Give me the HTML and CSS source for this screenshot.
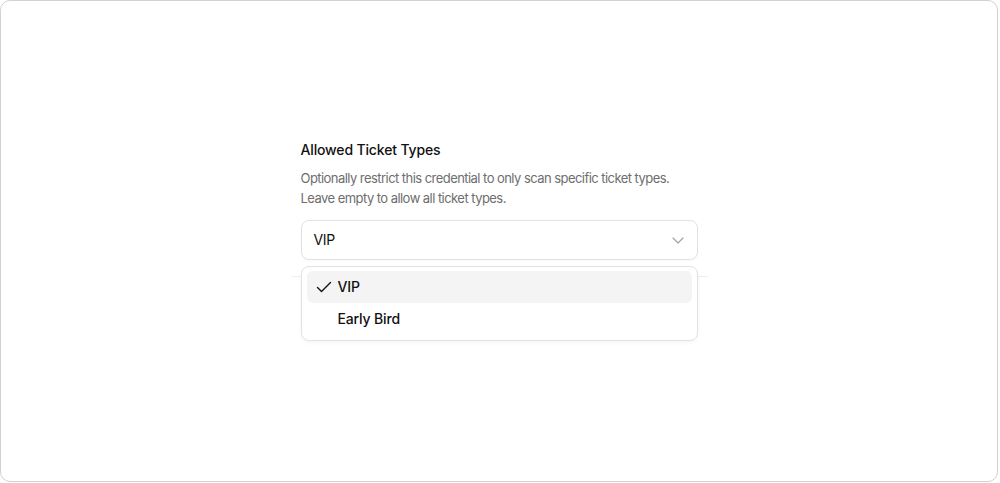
FILE: index.html
```html
<!DOCTYPE html>
<html>
<head>
<meta charset="utf-8">
<link rel="stylesheet" href="styles.css">
</head>
<body>
<div class="frame">
  <div class="field">
    <div class="label">Allowed Ticket Types</div>
    <div class="desc">Optionally restrict this credential to only scan specific ticket types.<br>Leave empty to allow all ticket types.</div>
    <div class="select">
      <span class="value">VIP</span>
      <svg class="chev" width="14" height="14" viewBox="0 0 14 14"><path d="M2 5 L7 10 L12 5" fill="none" stroke="#a0a0a0" stroke-width="1.1" stroke-linecap="round" stroke-linejoin="round"/></svg>
    </div>
    <div class="popover-area">
      <div class="listbox">
        <div class="option active">
          <svg class="check" width="16" height="16" viewBox="0 0 16 16"><path d="M1.5 8.5 L5.5 12.5 L14.5 3.5" fill="none" stroke="#111" stroke-width="1.4" stroke-linecap="round" stroke-linejoin="round"/></svg>
          <span>VIP</span>
        </div>
        <div class="option">
          <span class="check-space"></span>
          <span>Early Bird</span>
        </div>
      </div>
    </div>
  </div>
</div>
</body>
</html>
```
FILE: styles.css
```css
html, body {
  margin: 0;
  padding: 0;
  background: #fff;
}
body {
  font-family: Inter, "Noto Sans", sans-serif;
  color: #111;
}
.frame {
  width: 996px;
  height: 480px;
  border: 1px solid #d2d2d2;
  border-radius: 10px;
  display: flex;
  flex-direction: column;
  align-items: center;
  justify-content: center;
}
.field {
  width: 397px;
  margin-top: -2px;
}
.label {
  font-size: 14px;
  line-height: 20px;
  font-weight: 500;
  color: #111;
  letter-spacing: -0.15px;
}
.desc {
  margin-top: 8px;
  font-size: 13px;
  line-height: 20px;
  color: #6e6e6e;
  letter-spacing: -0.55px;
  white-space: nowrap;
}
.select {
  margin-top: 12px;
  height: 38px;
  border: 1px solid #e2e2e2;
  border-radius: 8px;
  display: flex;
  align-items: center;
  justify-content: space-between;
  padding: 0 12px 0 12px;
  box-shadow: 0 1px 2px rgba(0,0,0,0.03);
}
.value {
  font-size: 14px;
  color: #111;
  letter-spacing: -0.3px;
}
.chev {
  display: block;
}
.popover-area {
  position: relative;
  padding-top: 6px;
}
.popover-area::before {
  content: "";
  position: absolute;
  top: 16px;
  left: -10px;
  right: -10px;
  height: 1px;
  background: #efefef;
}
.listbox {
  position: relative;
  z-index: 1;
  background: #fff;
  border: 1px solid #e2e2e2;
  border-radius: 8px;
  padding: 4px 5px 5px;
  box-shadow: 0 2px 4px rgba(0,0,0,0.04);
}
.option {
  height: 32px;
  border-radius: 6px;
  display: flex;
  align-items: center;
  padding-left: 9px;
  gap: 6px;
  font-size: 14px;
  font-weight: 500;
  color: #111;
  letter-spacing: -0.15px;
}
.option.active {
  background: #f4f4f4;
}
.check {
  display: block;
  width: 16px;
  height: 16px;
}
.check-space {
  width: 16px;
  height: 16px;
}
```
